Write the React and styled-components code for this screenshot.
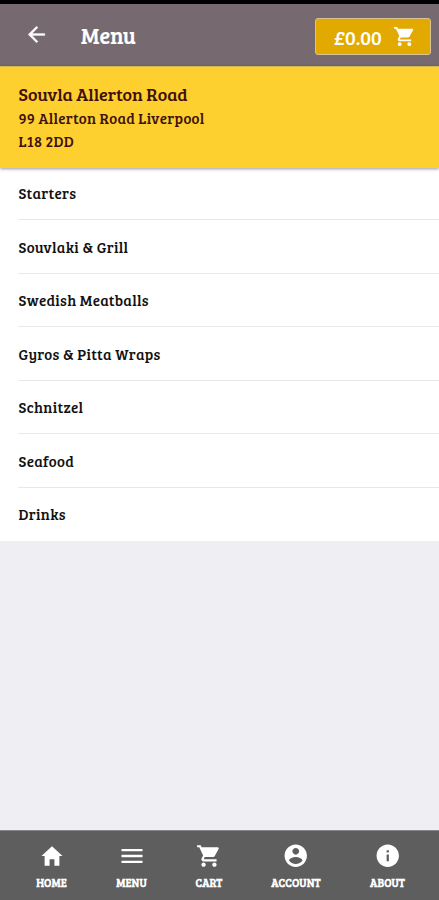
import React from 'react';
import styled, { createGlobalStyle } from 'styled-components';
import {
  IoMdArrowBack,
  IoMdContact,
  IoMdHome,
  IoMdInformationCircle,
  IoMdMenu,
} from 'react-icons/io';
import { MdShoppingCart } from 'react-icons/md';

const GlobalStyle = createGlobalStyle`
  * { box-sizing: border-box; }
  body {
    margin: 0;
    background: #efeef3;
    font-family: 'Bree Serif', 'DejaVu Serif Condensed', 'DejaVu Serif', serif;
    font-stretch: condensed;
  }
  button { font: inherit; font-stretch: inherit; color: inherit; padding: 0; border: 0; background: none; }
`;

const Screen = styled.div`
  display: flex;
  flex-direction: column;
  height: 900px;
  overflow: hidden;
`;

const StatusBar = styled.div`
  flex: 0 0 4px;
  background: #000;
`;

const Toolbar = styled.header`
  flex: 0 0 62px;
  display: flex;
  align-items: center;
  padding: 2px 8px 0 24px;
  background: #766a70;
  color: #fff;
`;

const BackButton = styled.button`
  display: flex;
  width: 57px;
  margin-top: -3px;
  font-size: 25px;
  svg { stroke: #fff; stroke-width: 6px; }
`;

const Title = styled.h1`
  flex: 1;
  margin: -2px 0 0;
  font-size: 22px;
  line-height: 28px;
  font-weight: 400;
  letter-spacing: 0.1px;
  -webkit-text-stroke: 0.2px #fff;
`;

const CartButton = styled.button`
  display: flex;
  align-items: center;
  justify-content: space-between;
  width: 116px;
  height: 37px;
  padding: 0 14px 0 18px;
  border: 1px solid #d8c391;
  border-radius: 3px;
  background: #e2a900;
`;

const Total = styled.span`
  margin-top: 2px;
  font-size: 20px;
  line-height: 24px;
`;

const Restaurant = styled.section`
  position: relative;
  flex: 0 0 102px;
  padding: 15px 18px 0 18.5px;
  border-top: 1px solid #d7b552;
  background: #fdd02f;
  color: #40100c;
  box-shadow: 0 1px 3px rgba(0, 0, 0, 0.4);
`;

const Line = styled.div`
  height: 23.5px;
  line-height: 24px;
  font-size: ${(p) => p.$size}px;
  letter-spacing: ${(p) => p.$spacing}px;
  white-space: nowrap;
`;

const Categories = styled.ul`
  display: grid;
  grid-template-rows: 52px;
  grid-auto-rows: 53.5px;
  margin: 0;
  padding: 0 0 0 18px;
  list-style: none;
  background: #fff;
`;

const Category = styled.li`
  display: flex;
  align-items: flex-end;
  padding: 0 0 16px 0.5px;
  border-bottom: 1px solid #e8e8e8;
  color: #111;
  font-size: 15px;
  line-height: 20px;
  letter-spacing: 0.32px;
  &:last-child { border-color: transparent; }
`;

const TabBar = styled.nav`
  display: grid;
  grid-template-columns: 80px 80px 75px 99px 84px;
  height: 70px;
  margin-top: auto;
  padding-left: 11.5px;
  border-top: 1px solid #888;
  background: #5e5e5e;
  color: #fff;
`;

const Tab = styled.button`
  display: flex;
  flex-direction: column;
  align-items: center;
  padding-top: 11px;
`;

const IconSlot = styled.span`
  display: flex;
  align-items: center;
  justify-content: center;
  height: 27px;
  font-size: ${(p) => p.$size}px;
`;

const TabLabel = styled.span`
  margin-top: 6px;
  font-size: 11px;
  line-height: 16px;
  font-weight: 700;
  letter-spacing: 0.1px;
`;

const categories = [
  'Starters',
  'Souvlaki & Grill',
  'Swedish Meatballs',
  'Gyros & Pitta Wraps',
  'Schnitzel',
  'Seafood',
  'Drinks',
];

const tabs = [
  ['HOME', IoMdHome, 26],
  ['MENU', IoMdMenu, 28],
  ['CART', MdShoppingCart, 26],
  ['ACCOUNT', IoMdContact, 27.5],
  ['ABOUT', IoMdInformationCircle, 27.5],
];

export default function App() {
  return (
    <Screen>
      <GlobalStyle />
      <StatusBar />
      <Toolbar>
        <BackButton aria-label="Back"><IoMdArrowBack /></BackButton>
        <Title>Menu</Title>
        <CartButton>
          <Total>£0.00</Total>
          <MdShoppingCart size={23} />
        </CartButton>
      </Toolbar>
      <Restaurant>
        <Line $size={18} $spacing={0}>Souvla Allerton Road</Line>
        <Line $size={15} $spacing={0.3}>99 Allerton Road Liverpool</Line>
        <Line $size={15} $spacing={0.3}>L18 2DD</Line>
      </Restaurant>
      <Categories>
        {categories.map((name) => (
          <Category key={name}>{name}</Category>
        ))}
      </Categories>
      <TabBar>
        {tabs.map(([name, Icon, size]) => (
          <Tab key={name}>
            <IconSlot $size={size}><Icon /></IconSlot>
            <TabLabel>{name}</TabLabel>
          </Tab>
        ))}
      </TabBar>
    </Screen>
  );
}
